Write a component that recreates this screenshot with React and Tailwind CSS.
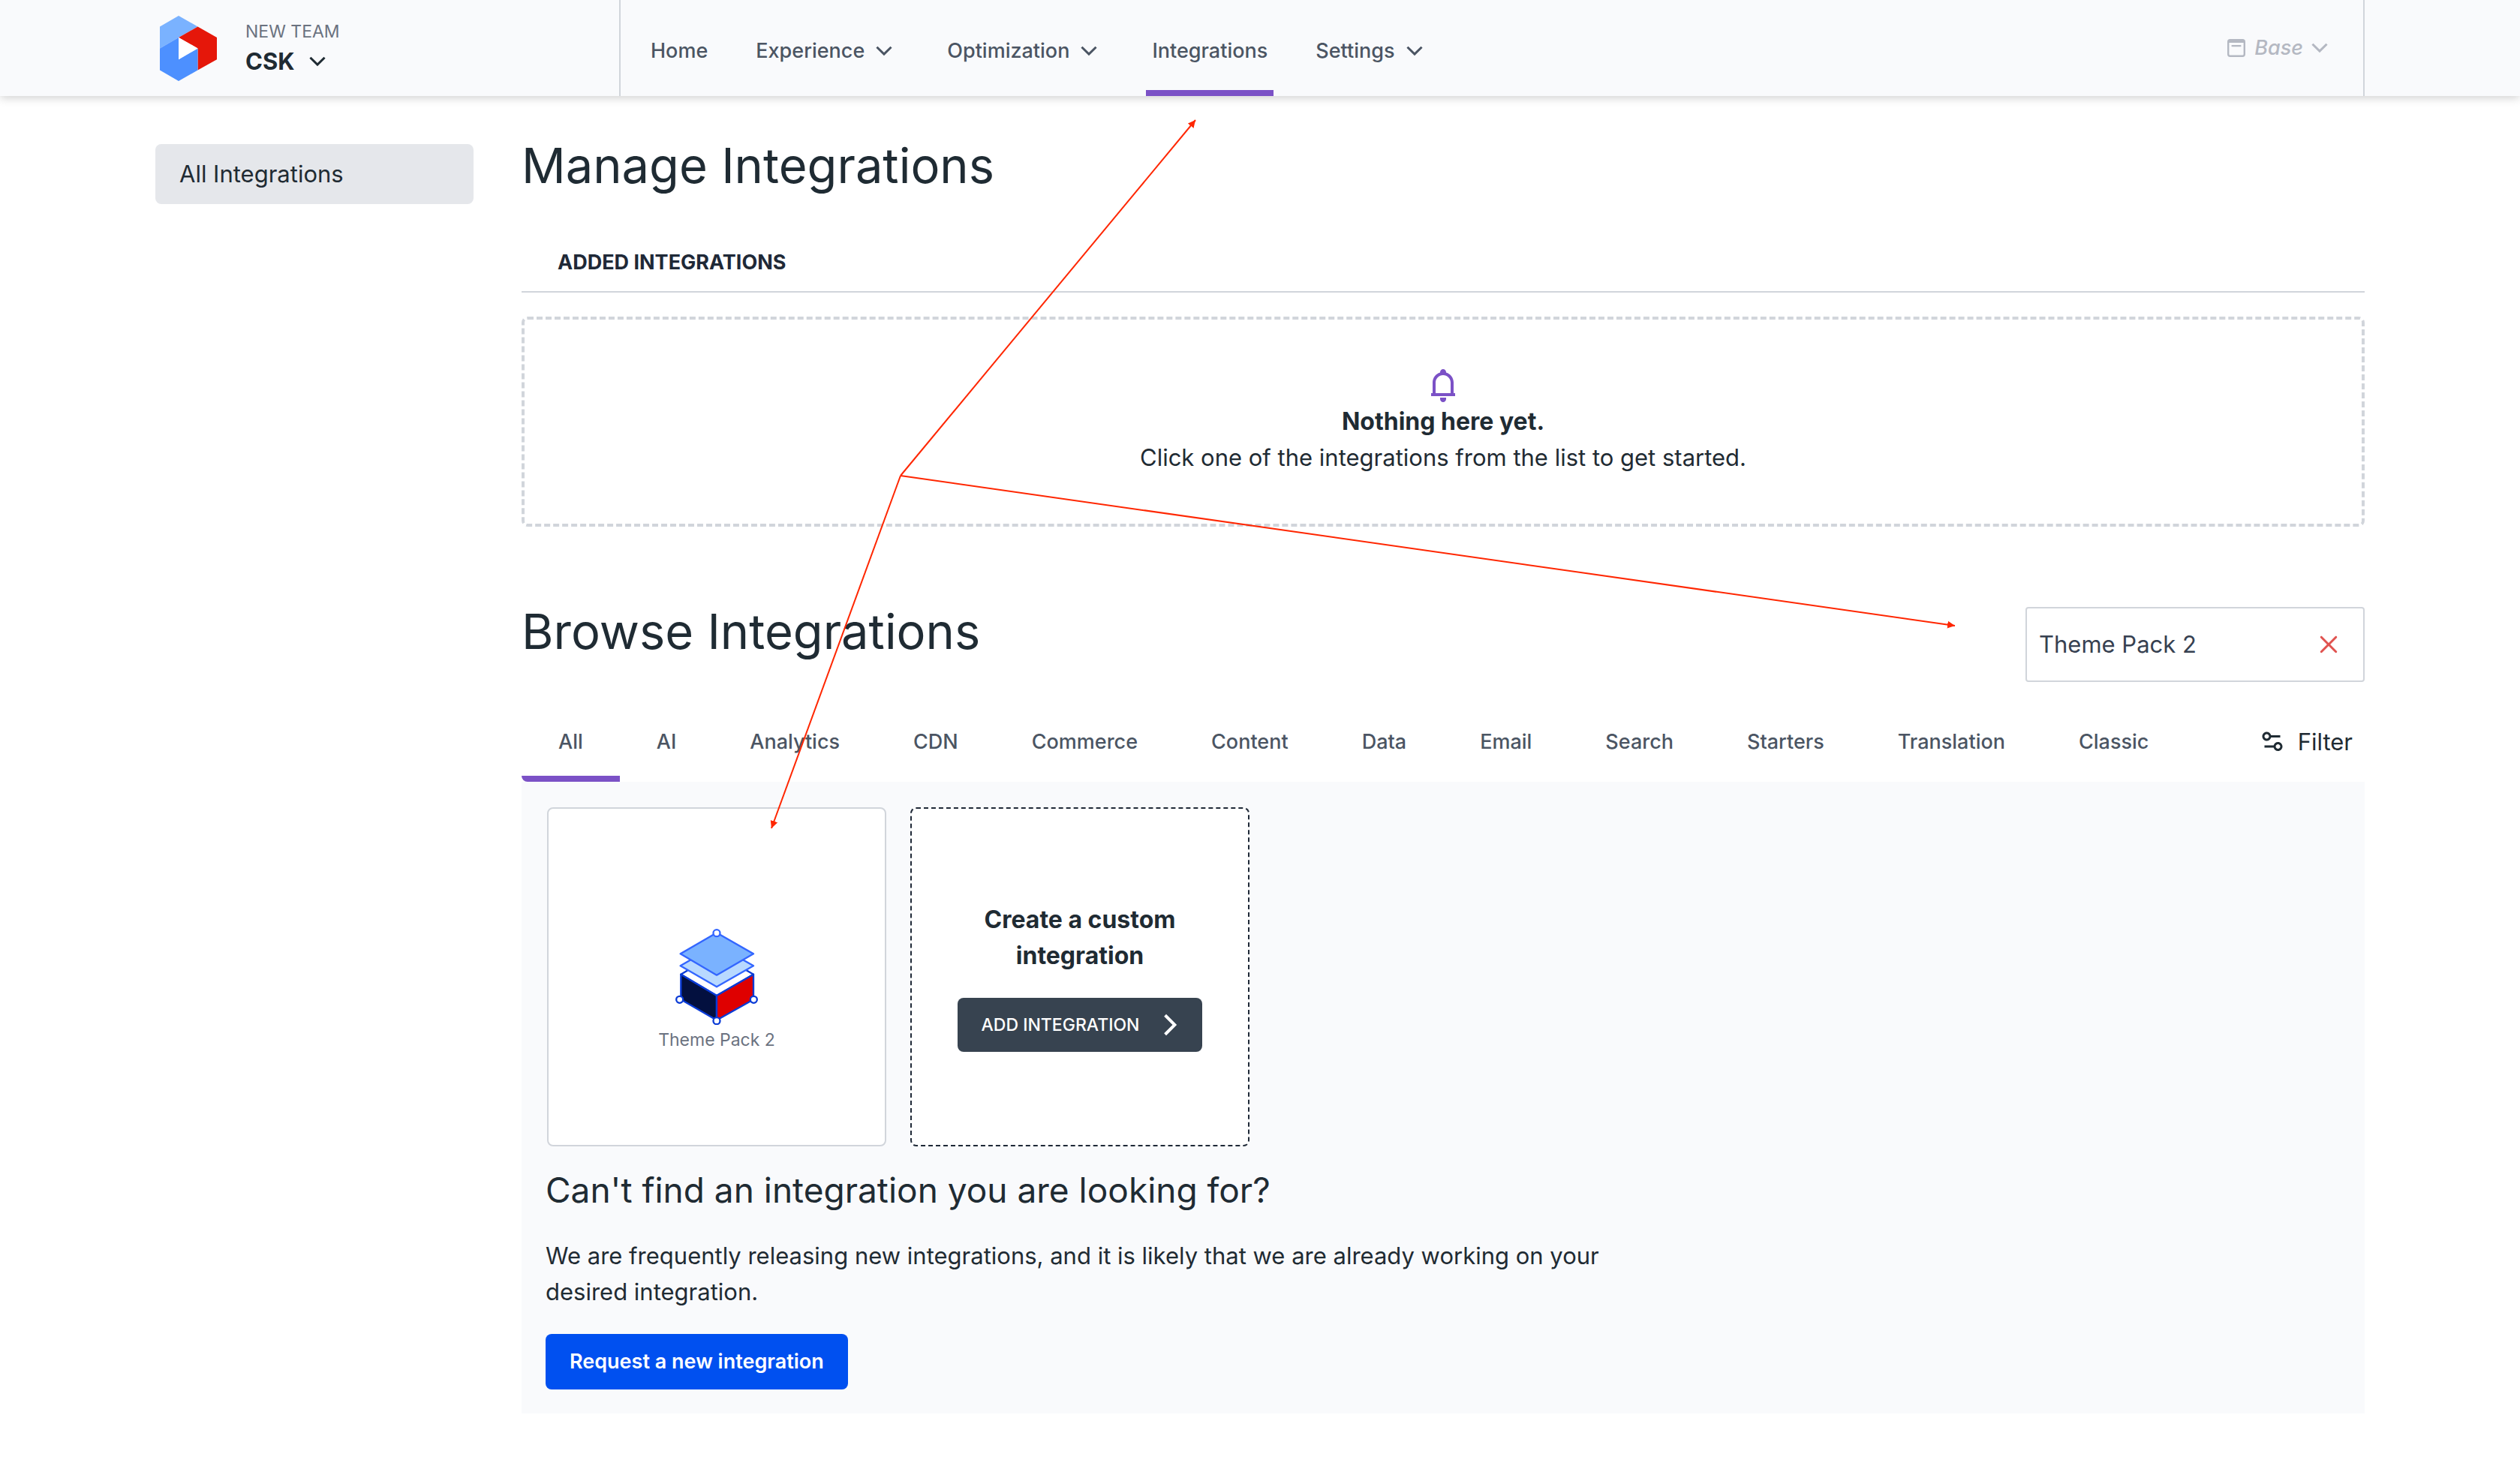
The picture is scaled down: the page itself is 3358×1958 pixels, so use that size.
import { useState } from "react";
import { CgBell, CgChevronDown, CgChevronRight, CgClose, CgOptions } from "react-icons/cg";

const NAV = [
  { label: "Home" },
  { label: "Experience", menu: true },
  { label: "Optimization", menu: true },
  { label: "Integrations", current: true },
  { label: "Settings", menu: true },
];

const TABS = ["All", "AI", "Analytics", "CDN", "Commerce", "Content", "Data", "Email", "Search", "Starters", "Translation", "Classic"];

function Logo() {
  return (
    <svg viewBox="23 20 76 87" className="h-[87px] w-[76px] shrink-0" aria-hidden="true">
      <path d="M48 20L73.5 34.5L48 49L23 63.5V34.5Z" fill="#7ab2ff" />
      <path d="M73.5 34.5L99 49V78.3L73.5 92.6V63.5L48 49Z" fill="#e5170a" />
      <path d="M23 63.5L48 49V78.3L73.5 63.5V92.6L48 107L23 92.6Z" fill="#4d90ff" />
      <path d="M48 49L73.5 63.5L48 78.3Z" fill="#fff" />
    </svg>
  );
}

function ThemePackLogo() {
  return (
    <svg viewBox="120 113 328 384" className="h-32 w-[110px]" aria-hidden="true" strokeWidth="7" strokeLinejoin="round">
      <g stroke="#0a3bd6">
        <path d="M141 295L284 210L431 295L284 380Z" fill="#fff" />
        <path d="M141 295L284 380V478L141 396Z" fill="#03103f" />
        <path d="M431 295L284 380V478L431 396Z" fill="#df0000" />
        <circle cx="136" cy="396" r="13.5" fill="#fff" />
        <circle cx="432" cy="396" r="13.5" fill="#fff" />
        <circle cx="284" cy="481" r="13.5" fill="#fff" />
      </g>
      <g stroke="#3366ff">
        <path d="M139 261L284 177L431 261L284 345Z" fill="#b8d9ff" />
        <path d="M139 213L284 129L431 213L284 298Z" fill="#7ab2ff" />
        <circle cx="284" cy="130" r="13.5" fill="#fff" />
      </g>
    </svg>
  );
}

function ReleaseIcon() {
  return (
    <svg viewBox="0 0 24 24" className="size-6" fill="none" stroke="currentColor" aria-hidden="true">
      <rect x="1.2" y="1.2" width="21.6" height="21.6" rx="2.5" strokeWidth="2.4" />
      <path d="M1.5 3H22.5" strokeWidth="4" />
      <path d="M6.5 9.2H17.5" strokeWidth="2.2" strokeLinecap="round" />
    </svg>
  );
}

function Header() {
  return (
    <header className="bg-[#f9fafc] shadow-[0_2px_12px_rgba(0,0,0,0.2)]">
      <div className="mx-auto flex h-32 max-w-[2944px]">
        <div className="flex w-[618px] shrink-0 items-center gap-[38px] pl-1.5">
          <Logo />
          <div className="flex flex-col items-start pt-1">
            <span className="text-[23px] leading-8 text-[#6b7280]">NEW TEAM</span>
            <button type="button" className="flex items-center gap-3 text-[31px] leading-12 font-bold text-[#1f2b33]">
              CSK <CgChevronDown className="size-9" aria-hidden="true" />
            </button>
          </div>
        </div>
        <div className="flex grow justify-between border-x-2 border-[#d1d5db] pr-10 pl-8">
          <nav className="flex gap-12" aria-label="Main">
            {NAV.map((item) => (
              <a
                key={item.label}
                href="#"
                aria-current={item.current ? "page" : undefined}
                className={`flex items-center gap-2 border-b-8 px-2 pt-4 text-[27px] leading-10 font-medium text-[#4b5563] ${
                  item.current ? "border-[#7b51c6]" : "border-transparent"
                }`}
              >
                {item.label}
                {item.menu && <CgChevronDown className="mr-0.5 size-9" aria-hidden="true" />}
              </a>
            ))}
          </nav>
          <button type="button" className="flex items-center gap-3 text-[27px] leading-10 font-medium text-[#b4b8c2] italic">
            <ReleaseIcon />
            <span className="flex items-center gap-1">
              Base <CgChevronDown className="size-9" aria-hidden="true" />
            </span>
          </button>
        </div>
      </div>
    </header>
  );
}

function Added() {
  return (
    <section>
      <h1 className="text-[65px] leading-[58px]">Manage Integrations</h1>
      <h2 className="mt-20 border-b-2 border-[#d1d5db] px-12 pb-[18px] text-[27px] leading-10 font-bold text-[#1f2937]">
        ADDED INTEGRATIONS
      </h2>
      <div className="mt-8 flex flex-col items-center rounded-lg border-4 border-dashed border-[#d1d5db] py-16 text-[31px] leading-12">
        <CgBell className="size-12 text-[#7b51c6]" aria-hidden="true" />
        <p className="text-[32px] font-bold">Nothing here yet.</p>
        <p>Click one of the integrations from the list to get started.</p>
      </div>
    </section>
  );
}

function Browse() {
  const [query, setQuery] = useState("Theme Pack 2");
  const [tab, setTab] = useState("All");
  return (
    <section className="mt-[107px]">
      <div className="flex items-start justify-between">
        <h2 className="pt-1 text-[65px] leading-[58px]">Browse Integrations</h2>
        <div className="flex h-25 w-[452px] items-center rounded border-2 border-[#d1d5db] bg-white pr-7 pl-4">
          <input
            aria-label="Search integrations"
            value={query}
            onChange={(e) => setQuery(e.target.value)}
            className="min-w-0 grow text-[31px] leading-12 text-[#374151] outline-none"
          />
          <button type="button" aria-label="Clear search" onClick={() => setQuery("")} className="text-[#e0524f]">
            <CgClose className="size-9" aria-hidden="true" />
          </button>
        </div>
      </div>
      <div className="mt-6 flex items-start justify-between">
        <div role="tablist" aria-label="Categories" className="flex">
          {TABS.map((t) => (
            <button
              key={t}
              type="button"
              role="tab"
              aria-selected={t === tab}
              onClick={() => setTab(t)}
              className={`rounded-bl-lg border-b-8 px-[49px] pt-9 pb-[25px] text-[27px] leading-10 font-medium text-[#4b5563] ${
                t === tab ? "border-[#7b51c6]" : "border-transparent"
              }`}
            >
              {t}
            </button>
          ))}
        </div>
        <button type="button" className="flex items-center gap-4 pt-8 pr-4 text-[31px] leading-12">
          <CgOptions className="size-9" aria-hidden="true" />
          Filter
        </button>
      </div>
      <div role="tabpanel" aria-label={tab} className="bg-[#f9fafc] p-8">
        <div className="grid grid-cols-5 gap-8 p-0.5">
          <button
            type="button"
            className="flex aspect-square flex-col items-center justify-center rounded-lg border-2 border-[#d1d5db] bg-white pt-10 text-[23px] leading-10 text-[#6b7280]"
          >
            <ThemePackLogo />
            Theme Pack 2
          </button>
          <div className="flex aspect-square flex-col items-center justify-center gap-8 rounded-lg border-2 border-dashed border-[#1f2937] bg-white px-16">
            <h3 className="text-center text-[32px] leading-12 font-bold">Create a custom integration</h3>
            <button
              type="button"
              className="flex h-18 items-center gap-3 rounded-lg bg-[#374350] pr-6 pl-8 text-[23px] leading-8 font-medium whitespace-nowrap text-white"
            >
              ADD INTEGRATION <CgChevronRight className="size-12" aria-hidden="true" />
            </button>
          </div>
        </div>
        <h2 className="mt-6 text-[46px] leading-16">Can't find an integration you are looking for?</h2>
        <p className="mt-8 max-w-[1440px] text-[31px] leading-12">
          We are frequently releasing new integrations, and it is likely that we are already working on your desired integration.
        </p>
        <button type="button" className="mt-8 rounded-lg bg-[#0050f0] px-8 py-[17px] text-[27px] leading-10 font-semibold text-white">
          Request a new integration
        </button>
      </div>
    </section>
  );
}

function Arrows() {
  return (
    <svg className="pointer-events-none absolute top-0 left-0 h-[1200px] w-[2700px]" viewBox="0 0 2700 1200" fill="none" aria-hidden="true">
      <defs>
        <marker id="head" viewBox="0 0 10 10" refX="10" refY="5" markerWidth="10" markerHeight="10" markerUnits="userSpaceOnUse" orient="auto">
          <path d="M0 0L10 5L0 10Z" fill="#ff2600" />
        </marker>
      </defs>
      <g stroke="#ff2600" strokeWidth="2">
        <path d="M1200 634L1593 160" markerEnd="url(#head)" />
        <path d="M1200 634L2605 834" markerEnd="url(#head)" />
        <path d="M1200 634L1028 1104" markerEnd="url(#head)" />
      </g>
    </svg>
  );
}

export default function App() {
  return (
    <div className="relative min-h-screen bg-white font-['Inter',sans-serif] text-[#1f2b33]">
      <Header />
      <div className="mx-auto flex max-w-[2944px] items-start gap-16 pt-16 pb-16">
        <aside className="w-[424px] shrink-0">
          <a href="#" className="block rounded-lg bg-[#e5e7eb] px-8 py-4 text-[31px] leading-12">
            All Integrations
          </a>
        </aside>
        <main className="min-w-0 grow">
          <Added />
          <Browse />
        </main>
      </div>
      <Arrows />
    </div>
  );
}
